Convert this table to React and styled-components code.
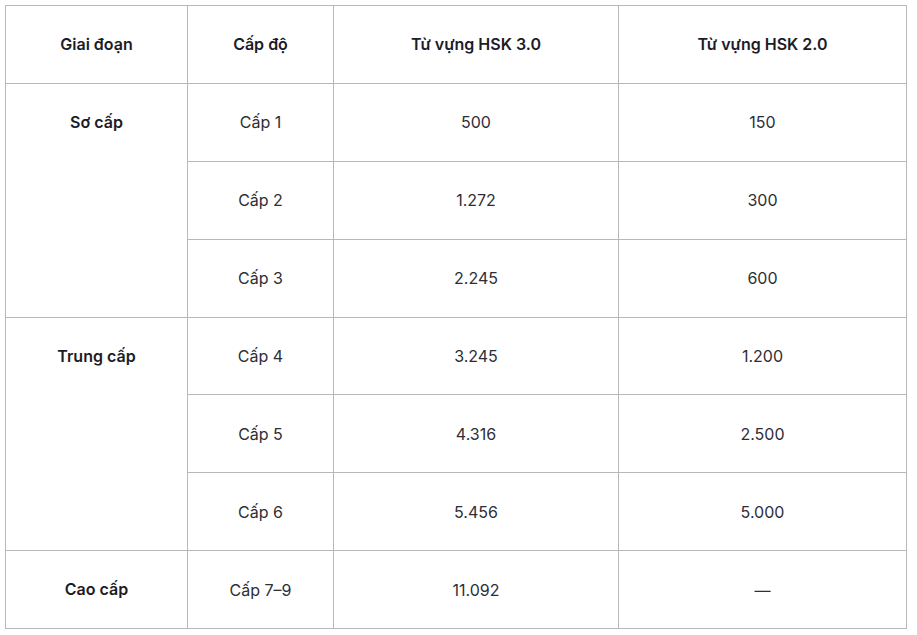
import React from 'react';
import styled, { createGlobalStyle } from 'styled-components';

const GlobalStyle = createGlobalStyle`
  body {
    margin: 0;
    background: #fff;
    font-family: Inter, 'Noto Sans', sans-serif;
  }
`;

const stages = [
  { name: 'Sơ cấp', levels: [['Cấp 1', '500', '150'], ['Cấp 2', '1.272', '300'], ['Cấp 3', '2.245', '600']] },
  { name: 'Trung cấp', levels: [['Cấp 4', '3.245', '1.200'], ['Cấp 5', '4.316', '2.500'], ['Cấp 6', '5.456', '5.000']] },
  { name: 'Cao cấp', levels: [['Cấp 7–9', '11.092', '—']] },
];

const App = () => {
  return (
    <Page>
      <GlobalStyle />
      <Table>
        <colgroup>
          <col style={{ width: 182 }} />
          <col style={{ width: 146 }} />
          <col style={{ width: 285 }} />
          <col style={{ width: 288 }} />
        </colgroup>
        <thead>
          <tr>
            <HeadCell>Giai đoạn</HeadCell>
            <HeadCell>Cấp độ</HeadCell>
            <HeadCell>Từ vựng HSK 3.0</HeadCell>
            <HeadCell>Từ vựng HSK 2.0</HeadCell>
          </tr>
        </thead>
        <tbody>
          {stages.map((stage) =>
            stage.levels.map((row, i) => (
              <tr key={stage.name + row[0]}>
                {i === 0 && (
                  <StageCell rowSpan={stage.levels.length}>{stage.name}</StageCell>
                )}
                <Cell>{row[0]}</Cell>
                <Cell>{row[1]}</Cell>
                <Cell>{row[2]}</Cell>
              </tr>
            ))
          )}
        </tbody>
      </Table>
    </Page>
  );
};

const Page = styled.div`
  padding: 5px;
`;

const Table = styled.table`
  width: 901px;
  table-layout: fixed;
  border-collapse: collapse;
  font-size: 16px;
  line-height: 24px;
`;

const Cell = styled.td`
  border: 1px solid #b8b8b8;
  height: 76.9px;
  padding: 0 12px;
  text-align: center;
  vertical-align: middle;
  color: #2e2e36;
`;

const HeadCell = styled.th`
  border: 1px solid #b8b8b8;
  height: 76.9px;
  padding: 0 12px;
  text-align: center;
  vertical-align: middle;
  font-weight: 600;
  color: #1c1c28;
`;

const StageCell = styled.td`
  border: 1px solid #b8b8b8;
  padding: 26px 12px 0;
  text-align: center;
  vertical-align: top;
  font-weight: 600;
  color: #1c1c28;
`;

export default App;
